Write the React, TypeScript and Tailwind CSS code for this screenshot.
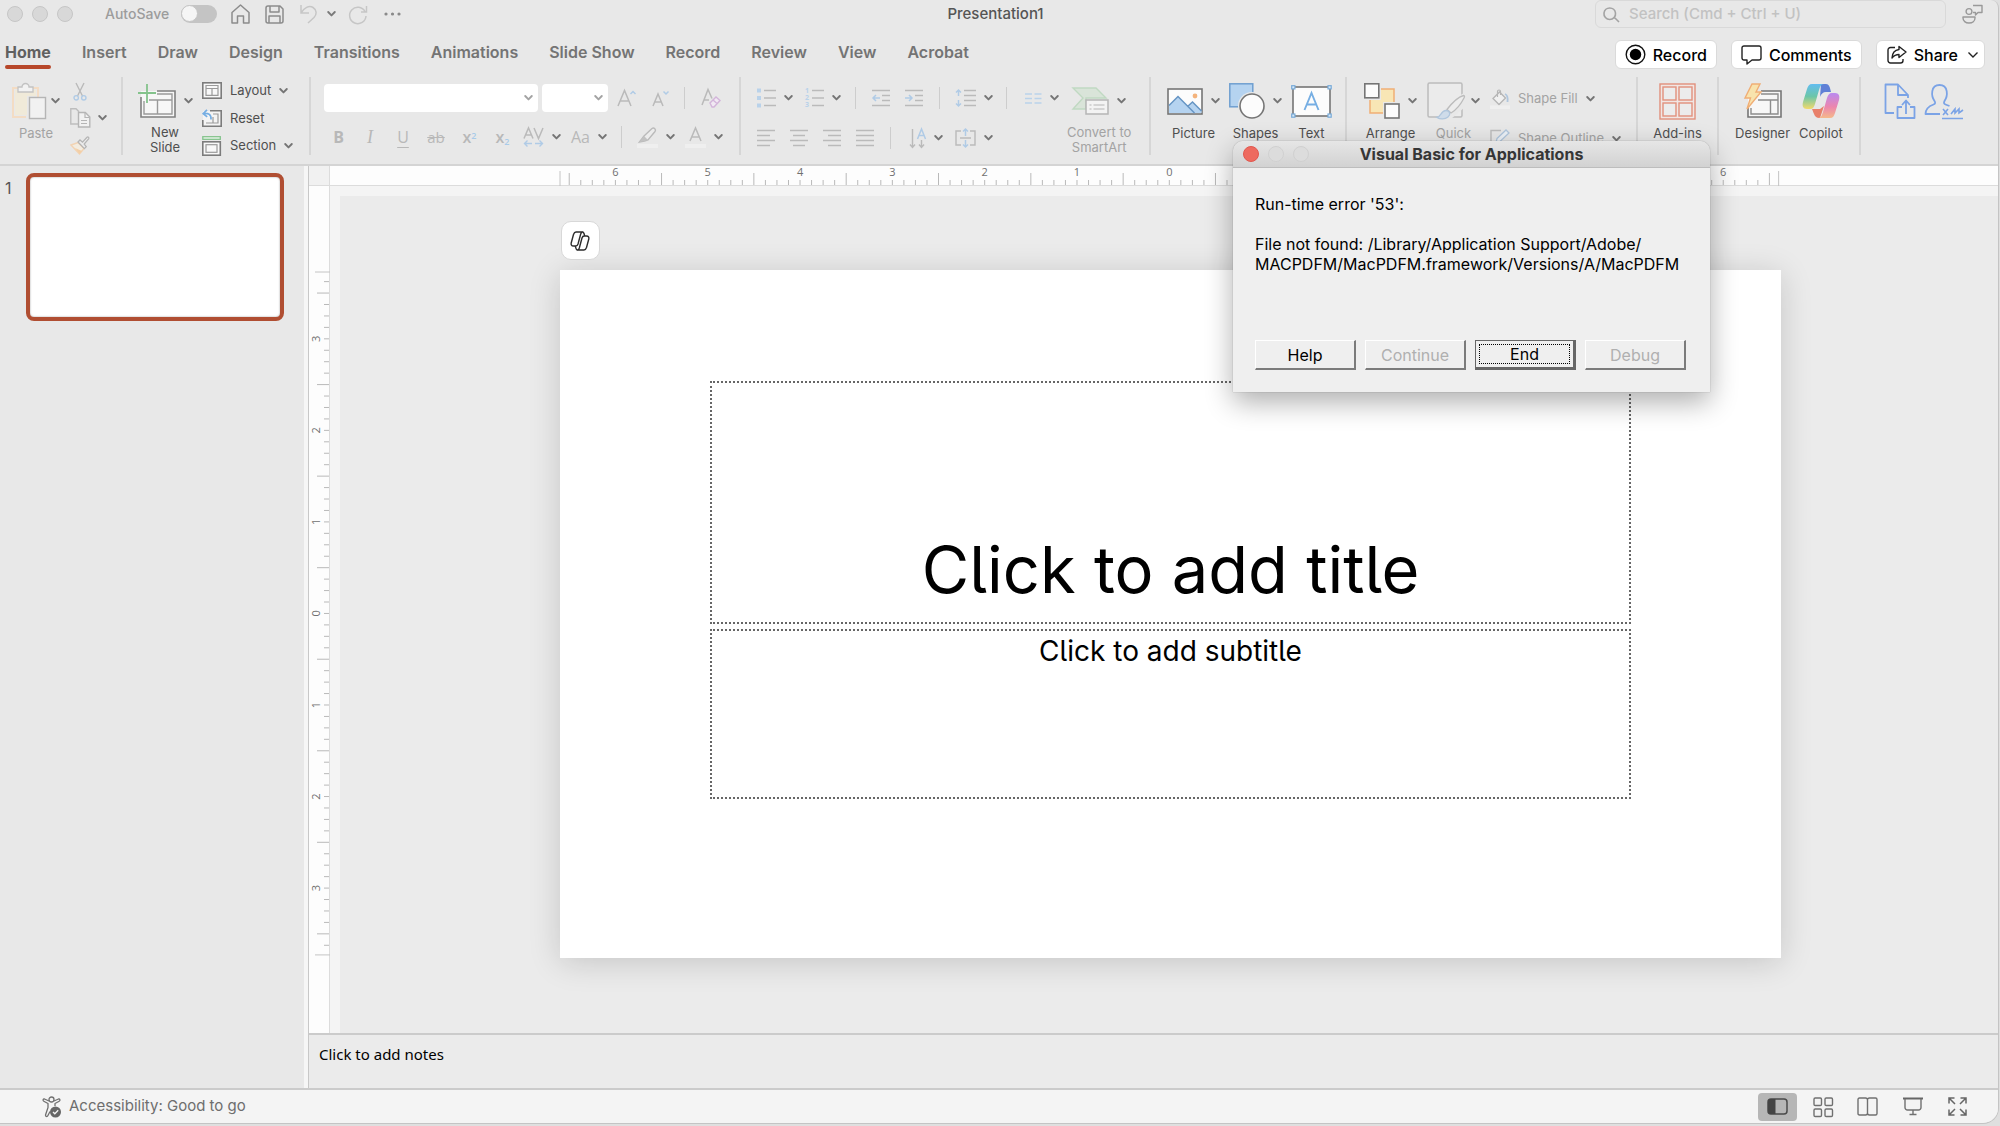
import type { ReactNode } from 'react';

const tabs = ['Home', 'Insert', 'Draw', 'Design', 'Transitions', 'Animations', 'Slide Show', 'Record', 'Review', 'View', 'Acrobat'];

type IconProps = { w: number; h: number; children: ReactNode; className?: string };

function Icon({ w, h, children, className = '' }: IconProps) {
  return (
    <svg width={w} height={h} viewBox={`0 0 ${w} ${h}`} fill="none" className={`shrink-0 overflow-visible ${className}`} aria-hidden="true">
      {children}
    </svg>
  );
}

function Chevron({ className = 'text-[#757575]' }: { className?: string }) {
  return (
    <Icon w={9} h={6} className={className}>
      <path d="M1.2 1 4.5 4.4 7.8 1" stroke="currentColor" strokeWidth="1.9" strokeLinecap="round" strokeLinejoin="round" />
    </Icon>
  );
}

function Group({ className, children }: { className: string; children: ReactNode }) {
  return <div className={`flex h-[78px] shrink-0 border-r-2 border-[#d6d6d6] ${className}`}>{children}</div>;
}

function Divider() {
  return <span className="h-[22px] w-px shrink-0 bg-[#cdcdcd]" />;
}

type BigButtonProps = { icon: ReactNode; lines?: string[]; menu?: boolean; muted?: boolean; label?: string };

function BigButton({ icon, lines = [], menu = true, muted = false, label }: BigButtonProps) {
  return (
    <button aria-label={label} className={`flex shrink-0 flex-col items-center pt-[3px] ${muted ? 'text-[#a3a3a3]' : 'text-[#4f4f4f]'}`}>
      <span className="flex h-[42px] items-center gap-2">
        {icon}
        {menu && <Chevron />}
      </span>
      <span className="mt-1 text-[13px] leading-[15px]">
        {lines.map((l) => (
          <span key={l} className="block whitespace-nowrap">{l}</span>
        ))}
      </span>
    </button>
  );
}

function ToolButton({ label, menu = false, className = '', children }: { label: string; menu?: boolean; className?: string; children: ReactNode }) {
  return (
    <button aria-label={label} className={`flex h-6 shrink-0 items-center justify-center gap-2 ${className}`}>
      {children}
      {menu && <Chevron />}
    </button>
  );
}

/* ---------- ribbon icons ---------- */

const PasteIcon = () => (
  <Icon w={35} h={38}>
    <path d="M14 35H1V6H7M20 6h6v9" stroke="#f3dcc4" strokeWidth="2" />
    <path d="M3 8h21v6h-9v19H3Z" fill="#f0ead9" />
    <path d="M6 10V5h4a3.5 3.5 0 0 1 7 0h4v5Z" fill="#f2f2f2" stroke="#c2c2c2" strokeWidth="1.3" />
    <rect x="17.5" y="15.5" width="16" height="21" fill="#f1f1f1" stroke="#b5b5b5" strokeWidth="1.4" />
  </Icon>
);

const CutIcon = () => (
  <Icon w={14} h={19}>
    <path d="M3 1 9.5 14M11 1 4.5 14" stroke="#bababa" strokeWidth="1.4" />
    <circle cx="3.2" cy="15.8" r="2.2" stroke="#b0cbe6" strokeWidth="1.4" />
    <circle cx="10.8" cy="15.8" r="2.2" stroke="#b0cbe6" strokeWidth="1.4" />
  </Icon>
);

const CopyIcon = () => (
  <Icon w={21} h={20}>
    <path d="M8 16H.8V.8H6l3 3" stroke="#bdbdbd" strokeWidth="1.4" />
    <path d="M8.5 4.5h6.8l4.5 4.5v10H8.500Z" fill="#f1f1f1" stroke="#b5b5b5" strokeWidth="1.4" />
    <path d="M15 5v4.500h4.500M11 12.500h6M11 15.500h6" stroke="#b5b5b5" strokeWidth="1.2" />
  </Icon>
);

const BrushIcon = () => (
  <Icon w={20} h={19}>
    <path d="M1 9 8 6.500l6 6L9.500 18Z" fill="#f3ece0" stroke="#f2d3b3" strokeWidth="1.4" />
    <path d="M5 12l7 3-2.500 3Z" fill="#f3cfa6" />
    <path d="m8 6 2-2 2.500 2.200L17 1.200c1-.8 2.400.5 1.600 1.600L14.200 8l2 2.600-1.800 2Z" fill="#ececec" stroke="#b5b5b5" strokeWidth="1.3" />
  </Icon>
);

const NewSlideIcon = () => (
  <Icon w={39} h={36}>
    <rect x="4" y="8" width="34" height="26" fill="#f7f7f7" />
    <path d="M20 8h18v26H4V14" stroke="#808080" strokeWidth="1.6" />
    <path d="M20 11h15v20H7V18M12 17h23M20.500 17v14" stroke="#9a9a9a" strokeWidth="1.4" />
    <path d="M10 1v19M1 10h18" stroke="#84c38c" strokeWidth="1.8" />
  </Icon>
);

const LayoutIcon = () => (
  <Icon w={20} h={17}>
    <rect x=".8" y=".8" width="18.400" height="15.400" fill="#f8f8f8" stroke="#7c7c7c" strokeWidth="1.6" />
    <path d="M4 3.500h12v9.800H4ZM4 6.500h12M10 6.500v7" stroke="#9a9a9a" strokeWidth="1.2" />
  </Icon>
);

const ResetIcon = () => (
  <Icon w={20} h={18}>
    <rect x="1" y="2" width="18" height="15" fill="#f4f4f4" />
    <path d="M8 1.800h11.200v15.400H.8V11" stroke="#7c7c7c" strokeWidth="1.6" />
    <path d="M11 5h5v9H4M11 8v6" stroke="#9a9a9a" strokeWidth="1.200" />
    <path d="M1.500 4.500c5-.8 8 1.200 7.500 6M5 .8 1.200 4.600 5.200 7.800" stroke="#76aee3" strokeWidth="1.700" />
  </Icon>
);

const SectionIcon = () => (
  <Icon w={20} h={20}>
    <rect x=".8" y=".7" width="17.500" height="2.600" fill="#f1f8f1" stroke="#84c38c" strokeWidth="1.300" />
    <rect x=".8" y="5.800" width="17.500" height="13.400" fill="#f8f8f8" stroke="#7c7c7c" strokeWidth="1.600" />
    <rect x="4" y="8.700" width="11" height="7.600" stroke="#9a9a9a" strokeWidth="1.200" />
  </Icon>
);

const SmartArtIcon = () => (
  <Icon w={37} h={28}>
    <path d="M1 1h23l10 10H14v11H1l10-11Z" fill="#d9e4d9" stroke="#c0d9c2" strokeWidth="1.400" />
    <rect x="14" y="13" width="22" height="14" fill="#f3f3f3" stroke="#b5b5b5" strokeWidth="1.500" />
    <path d="M17.500 18h2m2 0h11m-15 4h2m2 0h11" stroke="#b5b5b5" strokeWidth="1.200" />
  </Icon>
);

const PictureIcon = () => (
  <Icon w={36} h={27}>
    <rect x="1" y="1" width="34" height="25" fill="#fcfcfc" stroke="#757575" strokeWidth="1.600" />
    <path d="M2 17.500 11 8.500 27.500 25H2Z" fill="#b5d3f0" />
    <path d="m20.500 18.500 5-4.500 9 9V25H27.500Z" fill="#b5d3f0" />
    <path d="M2 17.500 11 8.500 27.500 25M20.500 18.500l5-4.500 9 9" stroke="#6695c4" strokeWidth="1.500" />
    <circle cx="28" cy="8" r="2.400" fill="#f4b37c" />
  </Icon>
);

const ShapesIcon = () => (
  <Icon w={36} h={36}>
    <rect x=".8" y=".8" width="23" height="23" fill="#b5d3f0" stroke="#6f9fd0" strokeWidth="1.500" />
    <circle cx="23" cy="23" r="14" fill="#e8e8e8" />
    <circle cx="23" cy="23" r="12" fill="#fcfcfc" stroke="#757575" strokeWidth="1.600" />
  </Icon>
);

const TextBoxIcon = () => (
  <Icon w={41} h={33}>
    <rect x="2" y="2" width="37" height="29" fill="#fcfcfc" stroke="#757575" strokeWidth="1.600" />
    {[[0.7, 0.7], [37, 0.7], [0.7, 29], [37, 29]].map(([x, y]) => (
      <rect key={`${x}-${y}`} x={x} y={y} width="3.200" height="3.200" fill="#d9e9f7" stroke="#78abd9" strokeWidth="1.200" />
    ))}
    <path d="M13.500 25 20.500 8l7 17M16 19.500h9" stroke="#76aee3" strokeWidth="1.900" />
  </Icon>
);

const ArrangeIcon = () => (
  <Icon w={36} h={36}>
    <rect x="6" y="6" width="24" height="24" fill="#f8e6b5" stroke="#f0ae75" strokeWidth="1.500" />
    <rect x="0" y="0" width="17" height="17" fill="#e8e8e8" />
    <rect x="19" y="19" width="17" height="17" fill="#e8e8e8" />
    <rect x=".8" y=".8" width="14" height="14" fill="#fcfcfc" stroke="#757575" strokeWidth="1.600" />
    <rect x="21" y="21" width="14" height="14" fill="#fcfcfc" stroke="#757575" strokeWidth="1.600" />
  </Icon>
);

const QuickIcon = () => (
  <Icon w={36} h={38}>
    <rect x="1" y="1" width="34" height="34" rx="1.500" fill="#ebebeb" stroke="#bcbcbc" strokeWidth="1.500" />
    <path d="m17 28 18-16 3-1v14L24 37H12Z" fill="#e8e8e8" />
    <path d="M20 27.500C25 21 31 15 36.500 13.500c1.500 0 1 1.500.5 2.500C34 22 29 28 24 31Z" fill="#ededed" stroke="#bcbcbc" strokeWidth="1.300" />
    <path d="M10 35.500c4-.5 4-7 9-7 4 0 5 4 2 6.500-3 2.500-8 2.500-11 .5Z" fill="#cfdcea" stroke="#b0c6dd" strokeWidth="1.300" />
  </Icon>
);

const FillIcon = () => (
  <Icon w={20} h={20}>
    <path d="M3 9.500 9.500 3l6 6-6.500 6.500Z" fill="#f0f0f0" stroke="#b5b5b5" strokeWidth="1.300" />
    <path d="M7.500 8V2.500c0-2 3-2 3 0V6" stroke="#b5b5b5" strokeWidth="1.200" />
    <path d="M15 5c2.500 1 3 4 2.500 8" stroke="#b0c6dd" strokeWidth="1.800" />
    <rect y="16.500" width="20" height="3.500" fill="#efefef" />
  </Icon>
);

const OutlineIcon = () => (
  <Icon w={20} h={20}>
    <path d="M11 1.500H1V15" stroke="#bcbcbc" strokeWidth="1.400" />
    <path d="m7 9.500 9-8.500 3 3-9 8.500-4 1Z" fill="#edf2f7" stroke="#b0c6dd" strokeWidth="1.300" />
    <rect y="16.500" width="20" height="3.500" fill="#efefef" />
  </Icon>
);

const AddInsIcon = () => (
  <Icon w={37} h={37}>
    <rect x="1" y="1" width="35" height="35" fill="#f1e6e3" stroke="#e2907c" strokeWidth="1.400" />
    {[[4, 4], [20, 4], [4, 20], [20, 20]].map(([x, y]) => (
      <rect key={`${x}-${y}`} x={x} y={y} width="13" height="13" fill="#ececec" stroke="#e2907c" strokeWidth="1.400" />
    ))}
  </Icon>
);

const DesignerIcon = () => (
  <Icon w={38} h={36}>
    <rect x="4" y="8" width="33" height="26" fill="#f7f7f7" />
    <path d="M17 8h20v26H4V24" stroke="#757575" strokeWidth="1.600" />
    <path d="M17 11h17v20H7v-6M14 17h20M26.500 17v14" stroke="#8c8c8c" strokeWidth="1.400" />
    <path d="M8 1h8l-4 8h5L3 26l3.500-11H1Z" fill="#f8e3ad" stroke="#f0ae75" strokeWidth="1.400" />
  </Icon>
);

const CopilotIcon = () => (
  <Icon w={38} h={34}>
    <defs>
      <linearGradient id="cpBlue" x1="0" y1="0" x2="0" y2="1">
        <stop offset="0" stopColor="#62bdf0" />
        <stop offset=".5" stopColor="#6cc6a8" />
        <stop offset="1" stopColor="#f3da6c" />
      </linearGradient>
      <linearGradient id="cpPink" x1="0" y1="0" x2="0" y2="1">
        <stop offset="0" stopColor="#b98af0" />
        <stop offset=".55" stopColor="#ec86ae" />
        <stop offset="1" stopColor="#f5b98a" />
      </linearGradient>
    </defs>
    <path d="M19 0h5c3 0 4 3 5 8h-5c-3 0-5 2-6 5Z" fill="#5f80d6" />
    <path d="M10 25h8l4-3-4 12h-1c-4 0-5-4-7-9Z" fill="#e8806a" />
    <path d="M10 0h12c-3 0-4 3-5 6l-4 14c-1 3-2 5-5 5H5c-4 0-5-3-4-7L5 5c1-3 2-5 5-5Z" fill="url(#cpBlue)" />
    <path d="M28 34H16c3 0 4-3 5-6l4-14c1-3 2-5 5-5h3c4 0 5 3 4 7l-4 13c-1 3-2 5-5 5Z" fill="url(#cpPink)" />
  </Icon>
);

const ExportPdfIcon = () => (
  <Icon w={32} h={37}>
    <path d="M10 30H1.500V1.500H14L24 12v3M14 1.500V12h10" stroke="#7ba3e6" strokeWidth="1.800" strokeLinejoin="round" />
    <path d="M18 24h-4.500v11h17V24H26M22 31V18M18 22l4-4.500 4 4.500" stroke="#7ba3e6" strokeWidth="1.800" strokeLinejoin="round" />
  </Icon>
);

const SignIcon = () => (
  <Icon w={40} h={37}>
    <path d="M16 31H1.500c0-6 4-8 8-9.500 2-1 2-2 1-3.500C7 13 6.500 2 15.500 2S24 13 20.500 18c-1 2-.5 3 1 3.500l4 1.500" stroke="#7ba3e6" strokeWidth="1.800" strokeLinejoin="round" />
    <path d="m19 26 5 6m0-6-5 6M27 31l4-5v4l4-4v4l4-3M18 35.500h21" stroke="#7ba3e6" strokeWidth="1.600" />
  </Icon>
);

/* ---------- small paragraph glyphs ---------- */

const lineSets: Record<string, string> = {
  left: 'M0 1.500h18M0 6.500h13M0 11.500h18M0 16.500h13',
  center: 'M0 1.500h18M3 6.500h12M0 11.500h18M3 16.500h12',
  right: 'M0 1.500h18M5 6.500h13M0 11.500h18M5 16.500h13',
  justify: 'M0 1.500h18M0 6.500h18M0 11.500h18M0 16.500h18',
};

const Lines = ({ d }: { d: string }) => (
  <Icon w={18} h={18}>
    <path d={d} stroke="#bababa" strokeWidth="1.500" />
  </Icon>
);

const BulletsIcon = () => (
  <Icon w={19} h={20}>
    <path d="M0 .5h4v4H0ZM0 8h4v4H0ZM0 15.500h4v4H0Z" fill="#b9d2ea" />
    <path d="M7 2.500h12M7 10h12M7 17.500h12" stroke="#bababa" strokeWidth="1.500" />
  </Icon>
);

const NumbersIcon = () => (
  <Icon w={19} h={20}>
    <g fill="#b9d2ea" fontSize="7" fontFamily="Open Sans, sans-serif" fontWeight="700">
      <text x="0" y="5">1</text>
      <text x="0" y="12">2</text>
      <text x="0" y="19">3</text>
    </g>
    <path d="M7 2.500h12M7 10h12M7 17.500h12" stroke="#bababa" strokeWidth="1.500" />
  </Icon>
);

const IndentIcon = ({ out }: { out?: boolean }) => (
  <Icon w={18} h={18}>
    <path d="M0 1.500h18M10 6.500h8M10 11.500h8M0 16.500h18" stroke="#bababa" strokeWidth="1.500" />
    <path d={out ? 'M8 9H1m3-3L1 9l3 3' : 'M0 9h7M4 6l3 3-3 3'} stroke="#b0cbe6" strokeWidth="1.500" />
  </Icon>
);

const SpacingIcon = () => (
  <Icon w={21} h={18}>
    <path d="M9 1.500h12M9 6.500h12M9 11.500h12M9 16.500h12" stroke="#bababa" strokeWidth="1.500" />
    <path d="M3.500 1v6m0 4v6M1 3.500 3.500 1 6 3.500M1 14.500 3.500 17 6 14.500" stroke="#b0cbe6" strokeWidth="1.500" />
  </Icon>
);

const ColumnsIcon = () => (
  <Icon w={17} h={18}>
    <path d="M0 5h7M0 9.500h7M0 14h7M9.500 5h7M9.500 9.500h7M9.500 14h7" stroke="#b9d2ea" strokeWidth="1.500" />
  </Icon>
);

const TextDirectionIcon = () => (
  <Icon w={17} h={21}>
    <path d="M3.500 1v18M1 16.500l2.500 3 2.500-3M12.500 12v7M10 16.500l2.500 3 2.500-3" stroke="#bababa" strokeWidth="1.400" />
    <path d="M8.500 11 12.500 1l4 10M10 7.500h5" stroke="#b0cbe6" strokeWidth="1.500" />
  </Icon>
);

const AlignTextIcon = () => (
  <Icon w={21} h={20}>
    <path d="M6 3H1v14h5M15 3h5v14h-5M5 10h11" stroke="#bababa" strokeWidth="1.400" />
    <path d="M10.500 1v7m0 4v7M8 3.500 10.500 1 13 3.500M8 16.500l2.500 2.500 2.500-2.500" stroke="#b0cbe6" strokeWidth="1.500" />
  </Icon>
);

const CopilotOutline = () => (
  <Icon w={20} h={20}>
    <g stroke="#2d2d2d" strokeWidth="1.400" strokeLinejoin="round">
      <path d="M6 1h6.500c-1 0-1.500 1-1.800 2L8 13c-.4 1.300-1 2-2.200 2H3.500C1.500 15 .8 13.500 1.200 12L3.500 3.500C4 2 4.500 1 6 1Z" />
      <path d="M14 19H7.500c1 0 1.500-1 1.800-2L12 7c.4-1.300 1-2 2.200-2h2.300c2 0 2.700 1.500 2.300 3l-2.300 8.500c-.5 1.500-1 2.500-2.500 2.500Z" />
      <path d="M12.500 1c1.500 0 1.700 2 2.200 4M7.500 19c-1.500 0-1.700-2-2.200-4" />
    </g>
  </Icon>
);

/* ---------- rulers ---------- */

// spans are in inches either side of zero, 8 ticks to the inch
function ticksFor(limit: number) {
  const ticks: { pos: number; eighth: number }[] = [];
  for (let i = -Math.floor(limit * 8); i <= limit * 8; i++) {
    ticks.push({ pos: 50 + (i / 8 / (limit * 2)) * 100, eighth: Math.abs(i) });
  }
  return ticks;
}

function HorizontalRuler() {
  return (
    <svg className="h-[24px] w-[73.5%] overflow-visible" aria-hidden="true">
      <path d="M0 5v19" stroke="#c4c4c4" />
      {ticksFor(6.6).map(({ pos, eighth }) => (
        <line key={pos} x1={`${pos}%`} x2={`${pos}%`} y1={eighth % 8 === 4 ? 7 : 14} y2={19} stroke="#b9b9b9" />
      ))}
      {ticksFor(6.6).filter((t) => t.eighth % 8 === 0).map(({ pos, eighth }) => (
        <text key={pos} x={`${pos}%`} y={10} textAnchor="middle" className="fill-[#707070] font-['Open_Sans',sans-serif] text-[11px]">{eighth / 8}</text>
      ))}
      <line x1="100%" x2="100%" y1={5} y2={24} stroke="#c4c4c4" />
    </svg>
  );
}

function VerticalRuler() {
  return (
    <svg className="h-[81.3%] w-[24px] overflow-visible" aria-hidden="true">
      <path d="M6 0h19" stroke="#c4c4c4" />
      {ticksFor(3.73).map(({ pos, eighth }) => (
        <line key={pos} y1={`${pos}%`} y2={`${pos}%`} x1={eighth % 8 === 4 ? 8 : 15} x2={20} stroke="#b9b9b9" />
      ))}
      {ticksFor(3.73).filter((t) => t.eighth % 8 === 0).map(({ pos, eighth }) => (
        <svg key={pos} x={11} y={`${pos}%`} className="overflow-visible">
          <text transform="rotate(-90)" textAnchor="middle" className="fill-[#707070] font-['Open_Sans',sans-serif] text-[11px]">{eighth / 8}</text>
        </svg>
      ))}
      <line x1={6} x2={25} y1="100%" y2="100%" stroke="#c4c4c4" />
    </svg>
  );
}

/* ---------- sections ---------- */

function TitleBar() {
  return (
    <header className="grid h-7 grid-cols-[1fr_auto_1fr] items-center pr-[14px] pl-[7px]">
      <div className="flex items-center">
        <div className="flex gap-[9px]">
          {['Close', 'Minimize', 'Zoom'].map((n) => (
            <button key={n} aria-label={n} className="size-4 rounded-full border border-[#c6c6c6] bg-[#d8d8d8]" />
          ))}
        </div>
        <label htmlFor="autosave" className="ml-8 text-sm font-medium text-[#9c9c9c]">AutoSave</label>
        <input
          id="autosave"
          type="checkbox"
          className="ml-3 h-[18px] w-9 appearance-none rounded-full bg-[#c4c4c4] before:block before:size-[17px] before:rounded-full before:border before:border-[#c4c4c4] before:bg-[#f5f5f5]"
        />
        <button aria-label="Home" className="ml-[14px]">
          <Icon w={19} h={20}>
            <path d="M1 8.500 9.500 1 18 8.500V19h-5.500v-7h-6v7H1Z" stroke="#8c8c8c" strokeWidth="1.500" strokeLinejoin="round" />
          </Icon>
        </button>
        <button aria-label="Save" className="ml-[15px]">
          <Icon w={19} h={19}>
            <path d="M1 3a2 2 0 0 1 2-2h12l3 3v12a2 2 0 0 1-2 2H3a2 2 0 0 1-2-2Z M5 1v6h9V1M4 18v-7h11v7" stroke="#8c8c8c" strokeWidth="1.500" strokeLinejoin="round" />
          </Icon>
        </button>
        <button aria-label="Undo" className="ml-4 flex items-center gap-[9px]">
          <Icon w={18} h={20}>
            <path d="M1 1v8h8M1 9C4 4 9 1 13 3.500s4 7 1 10L8 19" stroke="#c6c6c6" strokeWidth="1.500" />
          </Icon>
          <Chevron className="text-[#7a7a7a]" />
        </button>
        <button aria-label="Redo" className="ml-3">
          <Icon w={20} h={19}>
            <path d="M17 6.500A8.200 8.200 0 1 0 18 11M18.500 1v6H13" stroke="#c6c6c6" strokeWidth="1.500" />
          </Icon>
        </button>
        <button aria-label="More commands" className="ml-4">
          <Icon w={17} h={4}>
            <path d="M2 2h.01M8.500 2h.01M15 2h.01" stroke="#8a8a8a" strokeWidth="3.200" strokeLinecap="round" />
          </Icon>
        </button>
      </div>
      <h1 className="text-[15px] font-medium text-[#555]">Presentation1</h1>
      <div className="flex items-center justify-end gap-4">
        <label className="flex h-7 w-[351px] items-center gap-[9px] rounded-md border border-[#d9d9d9] pl-[7px]">
          <Icon w={17} h={17}>
            <path d="m11 11 5 5M12.500 7A5.800 5.800 0 1 1 1 7a5.800 5.800 0 0 1 11.500 0Z" stroke="#a3a3a3" strokeWidth="1.600" />
          </Icon>
          <input type="search" aria-label="Search" placeholder="Search (Cmd + Ctrl + U)" className="w-full bg-transparent text-[15px] font-medium outline-none placeholder:text-[#c2c2c2]" />
        </label>
        <button aria-label="Presence">
          <Icon w={22} h={21}>
            <circle cx="7" cy="7.500" r="2.900" stroke="#999" strokeWidth="1.400" />
            <path d="M1 13h12v1c0 3-2.500 5-6 5s-6-2-6-5ZM11 1.500h9v7h-4l-2.500 2.500V8.500H11" stroke="#999" strokeWidth="1.400" strokeLinejoin="round" />
          </Icon>
        </button>
      </div>
    </header>
  );
}

function TabRow() {
  const action = 'flex h-[29px] items-center gap-[7px] rounded-md border border-[#dadada] bg-white text-base font-medium text-black';
  return (
    <div className="flex h-11 items-start justify-between pr-[13px] pl-[5px]">
      <nav className="flex items-start gap-[31px] pt-[14px]">
        {tabs.map((t, i) => (
          <button key={t} className={`text-base leading-5 ${i === 0 ? 'font-bold text-[#606060]' : 'font-semibold text-[#747474]'}`}>
            {t}
            {i === 0 && <span className="mt-[3px] block h-1 rounded-full bg-[#b7472a]" />}
          </button>
        ))}
      </nav>
      <div className="mt-3 flex gap-[14px]">
        <button className={`${action} px-[9px]`}>
          <Icon w={21} h={21}>
            <circle cx="10.500" cy="10.500" r="9.300" stroke="#111" strokeWidth="1.400" />
            <circle cx="10.500" cy="10.500" r="5.700" fill="#000" />
          </Icon>
          Record
        </button>
        <button className={`${action} px-[9px]`}>
          <Icon w={21} h={20}>
            <path d="M3 1h15a2 2 0 0 1 2 2v10a2 2 0 0 1-2 2h-7l-5 4v-4H3a2 2 0 0 1-2-2V3a2 2 0 0 1 2-2Z" stroke="#222" strokeWidth="1.400" strokeLinejoin="round" />
          </Icon>
          Comments
        </button>
        <button className={`${action} pr-[5px] pl-[10px]`}>
          <Icon w={20} h={19}>
            <path d="M8 2.500H3.500A2.500 2.500 0 0 0 1 5v10.500A2.500 2.500 0 0 0 3.500 18h10a2.500 2.500 0 0 0 2.500-2.500V14" stroke="#222" strokeWidth="1.400" />
            <path d="M12 1.500 19 7l-7 5.500V9.500C9 9.500 7 10.500 5 13c.3-5 3-8 7-8.500Z" stroke="#222" strokeWidth="1.400" strokeLinejoin="round" />
          </Icon>
          Share
          <Icon w={12} h={8} className="ml-[2px]">
            <path d="m1.500 1.500 4.500 4.500 4.500-4.500" stroke="#222" strokeWidth="1.400" />
          </Icon>
        </button>
      </div>
    </div>
  );
}

function FontGroup() {
  const glyph = "font-['Open_Sans',sans-serif] text-[#b8b8b8]";
  return (
    <Group className="w-[430px] flex-col pl-[13px]">
      <div className="mt-[7px] flex h-7 items-center">
        <span className="relative">
          <select aria-label="Font" className="block h-7 w-[214px] appearance-none rounded bg-white" />
          <span className="pointer-events-none absolute top-[11px] right-[5px]"><Chevron className="text-[#a3a3a3]" /></span>
        </span>
        <span className="relative ml-1">
          <select aria-label="Font size" className="block h-7 w-[66px] appearance-none rounded bg-white" />
          <span className="pointer-events-none absolute top-[11px] right-[5px]"><Chevron className="text-[#a3a3a3]" /></span>
        </span>
        <ToolButton label="Increase font size" className="ml-[9px]">
          <Icon w={20} h={18}>
            <path d="M1 17 7.500 1.500 14 17M3 12h9" stroke="#bababa" strokeWidth="1.500" />
            <path d="m13.500 5 2.500-2.500L18.500 5" stroke="#b0cbe6" strokeWidth="1.500" />
          </Icon>
        </ToolButton>
        <ToolButton label="Decrease font size" className="ml-[14px]">
          <Icon w={20} h={18}>
            <path d="M2 17 7 5l5 12M4 13h6" stroke="#bababa" strokeWidth="1.500" />
            <path d="m12.500 2.500 2.500 2.500 2.500-2.500" stroke="#b0cbe6" strokeWidth="1.500" />
          </Icon>
        </ToolButton>
        <span className="ml-[13px] flex"><Divider /></span>
        <ToolButton label="Clear formatting" className="ml-4">
          <Icon w={20} h={20}>
            <path d="M1 17 7 1.500l4 9M3 12h5" stroke="#bababa" strokeWidth="1.500" />
            <path d="m9 15 6-6 4 3.500-6 6.500h-2Zm3-3 4 3.500" fill="#f1e9f3" stroke="#d3b5da" strokeWidth="1.400" />
          </Icon>
        </ToolButton>
      </div>
      <div className="mt-[13px] flex h-6 items-center">
        <ToolButton label="Bold" className={`w-[29px] text-base font-bold ${glyph}`}>B</ToolButton>
        <ToolButton label="Italic" className="w-[34px] font-['Liberation_Serif',serif] text-lg text-[#b8b8b8] italic">I</ToolButton>
        <ToolButton label="Underline" className={`w-[32px] text-base underline underline-offset-4 ${glyph}`}>U</ToolButton>
        <ToolButton label="Strikethrough" className={`w-[34px] text-[15px] line-through ${glyph}`}>ab</ToolButton>
        <ToolButton label="Superscript" className={`w-[33px] text-base font-semibold ${glyph}`}>
          <span>x<sup className="text-[9px] text-[#a9cbe9]">2</sup></span>
        </ToolButton>
        <ToolButton label="Subscript" className={`w-[33px] text-base font-semibold ${glyph}`}>
          <span>x<sub className="text-[9px] text-[#a9cbe9]">2</sub></span>
        </ToolButton>
        <ToolButton label="Character spacing" menu className="ml-1">
          <Icon w={21} h={20}>
            <path d="M1 11.500 5.500 1 10 11.500M2.500 8h6M11 1l4.500 10.500L20 1" stroke="#bababa" strokeWidth="1.500" />
            <path d="M9 16.500H1.500m3-3-3 3 3 3M12 16.500h7.500m-3-3 3 3-3 3" stroke="#b0cbe6" strokeWidth="1.400" />
          </Icon>
        </ToolButton>
        <ToolButton label="Change case" menu className={`ml-[10px] text-base ${glyph}`}>Aa</ToolButton>
        <span className="ml-[14px] flex"><Divider /></span>
        <ToolButton label="Text highlight" menu className="ml-[15px]">
          <Icon w={21} h={21}>
            <path d="m7 9 8-7.500c2-1.500 4.500 1 3 3L11 13l-3.500 1-5 1Z" fill="#ececec" stroke="#bababa" strokeWidth="1.400" />
            <path d="m7 9 4 4-3.500 1-5 1Z" fill="#c2c2c2" />
            <rect y="17" width="21" height="4" fill="#efefef" />
          </Icon>
        </ToolButton>
        <ToolButton label="Font color" menu className="ml-[10px]">
          <Icon w={21} h={21}>
            <path d="M5 14 10.500 1 16 14M7 10h7" stroke="#bababa" strokeWidth="1.500" />
            <rect y="17" width="21" height="4" fill="#efefef" />
          </Icon>
        </ToolButton>
      </div>
    </Group>
  );
}

function ParagraphGroup() {
  return (
    <Group className="w-[410px] pl-[16px]">
      <div className="flex w-[310px] flex-col">
        <div className="mt-[9px] flex h-6 items-center">
          <ToolButton label="Bullets" menu><BulletsIcon /></ToolButton>
          <ToolButton label="Numbering" menu className="ml-3"><NumbersIcon /></ToolButton>
          <span className="ml-[14px] flex"><Divider /></span>
          <ToolButton label="Decrease indent" className="ml-4"><IndentIcon out /></ToolButton>
          <ToolButton label="Increase indent" className="ml-[15px]"><IndentIcon /></ToolButton>
          <span className="ml-4 flex"><Divider /></span>
          <ToolButton label="Line spacing" menu className="ml-[15px]"><SpacingIcon /></ToolButton>
          <span className="ml-[13px] flex"><Divider /></span>
          <ToolButton label="Columns" menu className="ml-[18px]"><ColumnsIcon /></ToolButton>
        </div>
        <div className="mt-4 flex h-6 items-center">
          <ToolButton label="Align left"><Lines d={lineSets.left} /></ToolButton>
          <ToolButton label="Center" className="ml-[15px]"><Lines d={lineSets.center} /></ToolButton>
          <ToolButton label="Align right" className="ml-[15px]"><Lines d={lineSets.right} /></ToolButton>
          <ToolButton label="Justify" className="ml-[15px]"><Lines d={lineSets.justify} /></ToolButton>
          <span className="ml-4 flex"><Divider /></span>
          <ToolButton label="Text direction" menu className="ml-[18px]"><TextDirectionIcon /></ToolButton>
          <ToolButton label="Align text" menu className="ml-3"><AlignTextIcon /></ToolButton>
        </div>
      </div>
      <BigButton icon={<SmartArtIcon />} lines={['Convert to', 'SmartArt']} muted />
    </Group>
  );
}

function Ribbon() {
  const row = 'flex h-5 items-center gap-2 whitespace-nowrap';
  return (
    <div className="flex h-[94px] border-b-2 border-[#d4d4d4] pt-[5px]">
      <Group className="w-[123px] pl-3">
        <BigButton icon={<span className="-mr-1"><PasteIcon /></span>} lines={['Paste']} muted />
        <div className="ml-[10px] flex flex-col gap-[7px] pt-1">
          <button aria-label="Cut" className="flex h-5 items-center pl-[3px]"><CutIcon /></button>
          <button aria-label="Copy" className="flex h-5 items-center gap-[7px]"><CopyIcon /><Chevron /></button>
          <button aria-label="Format painter" className="flex h-5 items-center"><BrushIcon /></button>
        </div>
      </Group>
      <Group className="w-[188px] pl-[14px]">
        <BigButton icon={<NewSlideIcon />} lines={['New', 'Slide']} />
        <div className="ml-[9px] flex flex-col gap-2 pt-1 text-[13px] text-[#4f4f4f]">
          <button className={row}><LayoutIcon />Layout<Chevron /></button>
          <button className={row}><ResetIcon />Reset</button>
          <button className={row}><SectionIcon />Section<Chevron /></button>
        </div>
      </Group>
      <FontGroup />
      <ParagraphGroup />
      <Group className="w-[196px] gap-[9px] pl-4">
        <BigButton icon={<PictureIcon />} lines={['Picture']} />
        <BigButton icon={<ShapesIcon />} lines={['Shapes']} />
        <BigButton icon={<TextBoxIcon />} lines={['Text']} menu={false} />
      </Group>
      <Group className="w-[291px] gap-[10px] pl-[17px]">
        <BigButton icon={<ArrangeIcon />} lines={['Arrange']} />
        <BigButton icon={<QuickIcon />} lines={['Quick']} muted />
        <div className="flex flex-col gap-5 pt-3 text-[13px] text-[#a3a3a3]">
          <button className={row}><FillIcon />Shape Fill<Chevron /></button>
          <button className={row}><OutlineIcon />Shape Outline<Chevron /></button>
        </div>
      </Group>
      <Group className="w-[81px] justify-center">
        <BigButton icon={<AddInsIcon />} lines={['Add-ins']} menu={false} />
      </Group>
      <Group className="w-[142px] gap-[9px] pl-4">
        <BigButton icon={<DesignerIcon />} lines={['Designer']} menu={false} />
        <BigButton icon={<CopilotIcon />} lines={['Copilot']} menu={false} />
      </Group>
      <div className="flex gap-2 pl-[23px]">
        <BigButton icon={<ExportPdfIcon />} label="Create PDF" menu={false} />
        <BigButton icon={<SignIcon />} label="Request signatures" menu={false} />
      </div>
    </div>
  );
}

function Editor() {
  return (
    <main className="flex min-w-0 grow flex-col border-l border-[#c8c8c8]">
      <div className="flex h-5">
        <div className="w-[21px] shrink-0 border-r border-b border-[#dcdcdc] bg-[#f1f1f1]" />
        <div className="flex h-5 grow justify-center border-b border-[#dcdcdc] bg-[#fdfdfd] pl-[10px]">
          <HorizontalRuler />
        </div>
      </div>
      <div className="flex grow">
        <div className="flex w-[21px] shrink-0 flex-col justify-center border-r border-[#dcdcdc] bg-[#fdfdfd] pt-[7px]">
          <VerticalRuler />
        </div>
        <div className="flex grow border-t-10 border-l-10 border-[#f4f4f4] bg-[#ebebeb]">
          <div className="flex grow items-center justify-center pb-px pl-[3px]">
            <section className="relative flex aspect-video w-[73.8%] flex-col gap-[5px] bg-white px-[9.1%] pt-[6.7%] pb-[9.6%] text-black shadow-[0_4px_30px_rgba(0,0,0,0.16)] [font-feature-settings:'cv05']">
              <button aria-label="Copilot" className="absolute -top-[49px] left-px flex size-[39px] items-center justify-center rounded-[10px] border border-[#d8d8d8] bg-white">
                <CopilotOutline />
              </button>
              <div className="flex grow-[243] basis-0 items-end justify-center border-2 border-dotted border-[#666] pb-3">
                <h2 className="text-[65px] leading-[80px]">Click to add title</h2>
              </div>
              <div className="flex grow-[174] basis-0 items-start justify-center border-2 border-dotted border-[#666] pt-[3px]">
                <p className="text-[28px] leading-[34px]">Click to add subtitle</p>
              </div>
            </section>
          </div>
        </div>
      </div>
      <textarea
        aria-label="Notes"
        placeholder="Click to add notes"
        className="block h-[55px] resize-none border-t-2 border-[#cbcbcb] bg-[#ebebeb] px-[10px] pt-2 font-['Noto_Sans',sans-serif] text-[15px] leading-[22px] outline-none placeholder:text-black"
      />
    </main>
  );
}

function StatusBar() {
  const view = 'flex h-7 w-[39px] items-center justify-center rounded';
  return (
    <footer className="flex h-[35px] items-center justify-between border-t-2 border-[#cbcbcb] bg-[#f4f4f4] pr-[21px] pl-[42px]">
      <button className="flex items-center gap-[7px] text-[15px] text-[#6e6e6e]">
        <Icon w={20} h={22}>
          <circle cx="9.500" cy="3.500" r="2.500" stroke="#707070" strokeWidth="1.300" />
          <path d="M7 5 2.500 3C1 2.700.5 4.500 1.800 5.200L6 7.500v4L3.500 19c-.3 1.500 1.700 2 2.300.8L8 15.500M12 5l4.500-2c1.500-.3 2 1.500.7 2.200L13 7.500V10" stroke="#707070" strokeWidth="1.300" strokeLinejoin="round" />
          <circle cx="13.500" cy="16" r="5.500" fill="#666" />
          <path d="m11 16 1.800 1.800 3.400-3.600" stroke="#f4f4f4" strokeWidth="1.300" />
        </Icon>
        Accessibility: Good to go
      </button>
      <div className="flex gap-[6px]">
        <button aria-label="Normal view" className={`${view} bg-[#b6b6b6]`}>
          <Icon w={21} h={17}>
            <rect x="1" y="1" width="19" height="15" rx="3" stroke="#4a4a4a" strokeWidth="1.500" />
            <path d="M8.500 1H4a3 3 0 0 0-3 3v9a3 3 0 0 0 3 3h4.500Z" fill="#444" />
          </Icon>
        </button>
        <button aria-label="Slide sorter" className={view}>
          <Icon w={20} h={20}>
            {[[1, 1], [12, 1], [1, 12], [12, 12]].map(([x, y]) => (
              <rect key={`${x}-${y}`} x={x} y={y} width="7.500" height="7.500" rx="1.200" stroke="#707070" strokeWidth="1.400" />
            ))}
          </Icon>
        </button>
        <button aria-label="Reading view" className={view}>
          <Icon w={21} h={19}>
            <path d="M2.500 1h6q2 0 2 2 0-2 2-2h6Q20 1 20 2.500v14q0 1.500-1.500 1.500h-6q-2 0-2-2 0 2-2 2h-6Q1 18 1 16.500v-14Q1 1 2.500 1ZM10.500 3v13" stroke="#707070" strokeWidth="1.400" />
          </Icon>
        </button>
        <button aria-label="Slide show" className={view}>
          <Icon w={20} h={19}>
            <path d="M0 1.500h20" stroke="#666" strokeWidth="2" />
            <path d="M2 2v8.500A2.500 2.500 0 0 0 4.500 13h11a2.500 2.500 0 0 0 2.500-2.500V2M10 13v4.500M6.500 17.500h7" stroke="#707070" strokeWidth="1.400" />
          </Icon>
        </button>
        <button aria-label="Fit to window" className={view}>
          <Icon w={19} h={19}>
            <path d="M1 6.500V1h5.500M1 1l6 6M12.500 1H18v5.500M18 1l-6 6M1 12.500V18h5.500M1 18l6-6M18 12.500V18h-5.500M18 18l-6-6" stroke="#666" strokeWidth="1.500" />
          </Icon>
        </button>
      </div>
    </footer>
  );
}

function ErrorDialog() {
  const base = 'flex h-[30px] w-[101px] items-center justify-center border-t border-l border-r-2 border-b-2 border-t-white border-l-white border-r-[#7b7b7b] border-b-[#7b7b7b] bg-[#efefef]';
  return (
    <div role="dialog" aria-labelledby="vba-title" className="absolute top-[141px] right-[290px] w-[477px] overflow-hidden rounded-t-[10px] bg-[#efefef] text-black shadow-[0_0_1px_rgba(0,0,0,0.5),0_10px_28px_rgba(0,0,0,0.32)]">
      <div className="grid h-[27px] grid-cols-[1fr_auto_1fr] items-center border-b border-[#bdbdbd] bg-linear-to-b from-[#e6e6e6] to-[#d2d2d2] px-[10px]">
        <div className="flex gap-[9px]">
          <button aria-label="Close dialog" className="size-4 rounded-full border border-[#e0574e] bg-[#ee6a5f]" />
          <span className="size-4 rounded-full border border-[#d0d0d0] bg-[#dcdcdc]" />
          <span className="size-4 rounded-full border border-[#d0d0d0] bg-[#dcdcdc]" />
        </div>
        <h2 id="vba-title" className="text-base font-bold text-[#363636]">Visual Basic for Applications</h2>
      </div>
      <div className="px-[22px] pt-[26px] pb-[22px] text-base leading-5">
        <p>Run-time error '53':</p>
        <p className="mt-5 h-[106px]">
          File not found: /Library/Application Support/Adobe/<br />
          MACPDFM/MacPDFM.framework/Versions/A/MacPDFM
        </p>
        <div className="flex gap-[9px]">
          <button className={base}>Help</button>
          <button disabled className={`${base} text-[#b0b0b0]`}>Continue</button>
          <button className="h-[30px] w-[101px] border border-r-3 border-b-3 border-[#666] bg-[#efefef] p-[3px]">
            <span className="flex h-full items-center justify-center border border-dotted border-black">End</span>
          </button>
          <button disabled className={`${base} text-[#b0b0b0]`}>Debug</button>
        </div>
      </div>
    </div>
  );
}

export default function App() {
  return (
    <div className="relative flex min-h-screen flex-col bg-[#dfdfdf] pr-px pb-[2px] font-[Inter,sans-serif]">
      <div className="flex grow flex-col overflow-hidden rounded-tr-lg rounded-br-2xl border-r border-b border-[#c4c4c4] bg-[#e8e8e8]">
        <TitleBar />
        <TabRow />
        <Ribbon />
        <div className="flex grow">
          <aside className="flex w-[308px] shrink-0 items-start border-r-4 border-[#f6f6f6] pt-[7px] pl-[5px]">
            <span className="w-[21px] pt-[3px] text-base text-[#555]">1</span>
            <button aria-label="Slide 1" className="h-[148px] w-[258px] rounded-lg border-4 border-[#b04e32] bg-white shadow-[inset_0_0_2px_rgba(0,0,0,0.4)]" />
          </aside>
          <Editor />
        </div>
        <StatusBar />
      </div>
      <ErrorDialog />
    </div>
  );
}
